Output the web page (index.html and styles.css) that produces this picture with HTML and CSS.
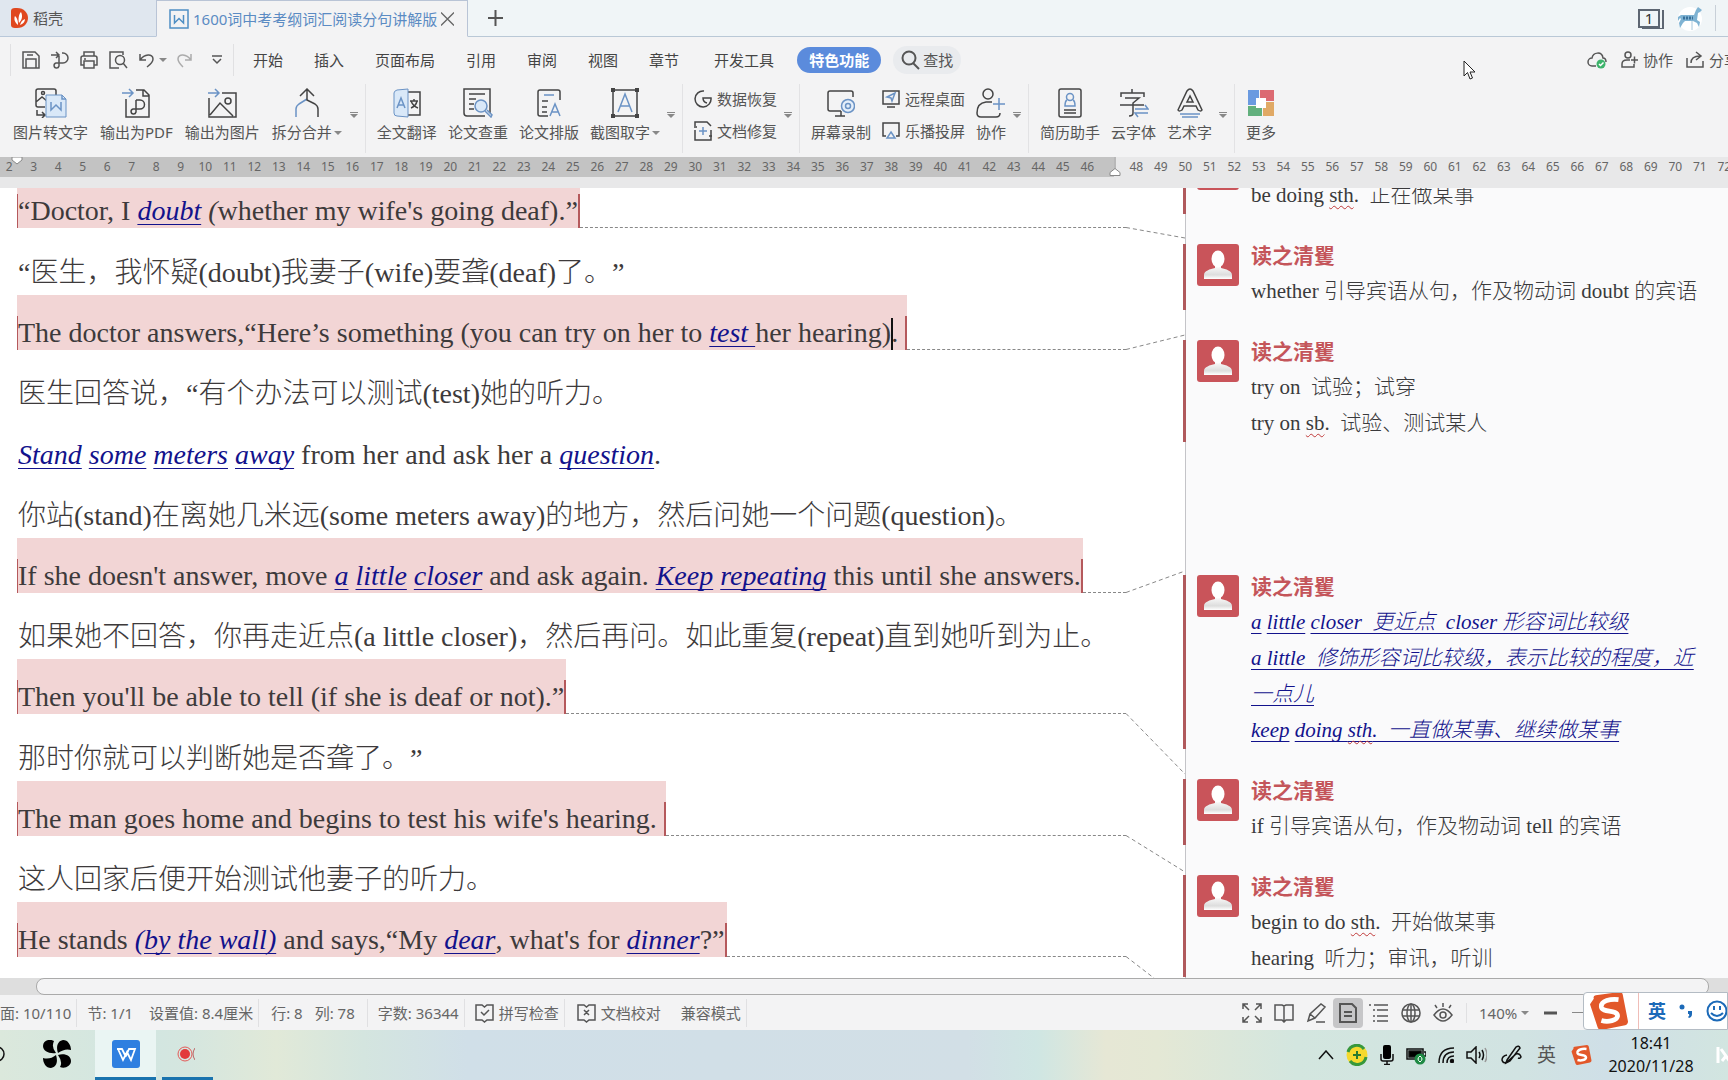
FILE: index.html
```html
<!DOCTYPE html>
<html lang="zh-CN">
<head>
<meta charset="utf-8">
<title>1600词中考考纲词汇阅读分句讲解版</title>
<link rel="stylesheet" href="styles.css">
</head>
<body>
<svg class="defs" aria-hidden="true">
  <defs>
    <linearGradient id="bust" x1="0" y1="0" x2="0" y2="1"><stop offset="0" stop-color="#fff"/><stop offset=".7" stop-color="#ddd"/><stop offset="1" stop-color="#fff"/></linearGradient>
    <symbol id="avatar" viewBox="0 0 42 42"><rect width="42" height="42" rx="3" fill="#c9545a"/><path d="M7 35v-4c0-4 6-6 11-7v-3h6v3c5 1 11 3 11 7v4z" fill="url(#bust)"/><ellipse cx="21" cy="15" rx="6.5" ry="8.5" fill="#fff"/></symbol>
    <symbol id="sogou" viewBox="0 0 40 40"><path d="M4 7Q3 4 6 3.500L31 0q3 0 3.500 3L40 31q0 3-3 4l-25 5q-3 0-4-3L0 13z" fill="#e2582a"/><path d="M30 8C22 7 11 9 12 16c1 6 17 2 17 9 0 5-10 7-17 5" fill="none" stroke="#fff" stroke-width="5"/></symbol>
  </defs>
</svg>

<header class="titlebar">
  <button class="tab tab-home">
    <svg width="17" height="20" viewBox="0 0 17 20"><path d="M0 3q0-3 4-3h2c7 0 11 5 11 10s-4 10-11 10H4q-4 0-4-3z" fill="#e0481f"/><path d="M7 17C3 14 3 10 4 8c2 2 3 4 3 9zM8 15C7 10 8 6 10 4c2 4 1 8-2 11zM9 17c1-3 2-5 5-6 0 3-2 5-5 6z" fill="#fff"/></svg>
    <span>稻壳</span>
  </button>
  <div class="tab tab-doc">
    <svg width="20" height="20" viewBox="0 0 20 20" fill="none" stroke="#4f8fc4" stroke-width="1.500"><rect x="1" y="1" width="18" height="18"/><path d="M5.500 6v8l4.500-4.500 4.500 4.500V6"/></svg>
    <span class="tab-name">1600词中考考纲词汇阅读分句讲解版</span>
    <button class="icon-button" aria-label="关闭"><svg width="13" height="14" viewBox="0 0 13 14" stroke="#666" stroke-width="1.300"><path d="M0 .5l13 13M13 .5l-13 13"/></svg></button>
  </div>
  <div class="titlebar-rest">
    <button class="icon-button" aria-label="新建"><svg width="15" height="16" viewBox="0 0 15 16" stroke="#555" stroke-width="2"><path d="M0 8h15M7.500 0v16"/></svg></button>
    <div class="titlebar-right">
      <span class="window-count">1</span>
      <svg width="26" height="26" viewBox="0 0 26 26"><circle cx="13" cy="14" r="12" fill="#fff"/><path d="M1 12l3-2h13l2-5 2-3 4 3-2 2-2 1-1 7 3 2-1 5-2-4-4-2H8l-2 2-3 5-1-5 2-4-1-1-2 3z" fill="#7fb3d3"/><path d="M6 13h10" stroke="#38709a" stroke-width="3" stroke-dasharray="2 1"/><path d="M15 16v9" stroke="#a8c8dc"/></svg>
    </div>
  </div>
</header>

<nav class="menubar">
  <div class="quick">
    <button class="icon-button" aria-label="保存"><svg width="18" height="18" viewBox="0 0 18 18"><path d="M1 1h12l4 4v12H1zM4 17V8h10v9M5 4h6"/></svg></button>
    <button class="icon-button" aria-label="输出为PDF"><svg width="18" height="18" viewBox="0 0 18 18"><path d="M0 4h8M5 1l3 3-3 3M11 2h1a5 5 0 0 1 0 10H5a2.500 2.500 0 1 0 3 3V5"/></svg></button>
    <button class="icon-button" aria-label="打印"><svg width="18" height="18" viewBox="0 0 18 18"><path d="M4 5V1h10v4M4 14H1V7q0-2 2-2h12q2 0 2 2v7h-3M4 10h10v7H4zM4 8h2"/></svg></button>
    <button class="icon-button" aria-label="打印预览"><svg width="19" height="18" viewBox="0 0 19 18"><path d="M14 4V1H1v16h9"/><circle cx="11" cy="9" r="4.500"/><path d="M14 12l4 5"/></svg></button>
    <button class="icon-button undo" aria-label="撤销"><svg width="15" height="16" viewBox="0 0 15 16"><path d="M1 2v6h6M1.500 7.500C5 2 14 1 14 7c0 3-2 5-6 8"/></svg><i class="caret"></i></button>
    <button class="icon-button redo" aria-label="恢复"><svg width="15" height="16" viewBox="0 0 15 16"><path d="M14 2v6H8M13.500 7.500C10 2 1 1 1 7c0 3 2 5 5 8"/></svg></button>
    <button class="icon-button" aria-label="自定义"><svg width="10" height="10" viewBox="0 0 10 10"><path d="M0 1h10M1 4l4 4 4-4"/></svg></button>
  </div>
  <div class="menus">
    <button>开始</button><button>插入</button><button>页面布局</button><button>引用</button><button>审阅</button><button>视图</button><button>章节</button><button>开发工具</button>
  </div>
  <button class="menu-active">特色功能</button>
  <button class="find"><svg width="19" height="20" viewBox="0 0 19 20" fill="none" stroke="#444" stroke-width="2"><circle cx="8" cy="8" r="6.500"/><path d="M12 13l6 6"/></svg><span>查找</span></button>
  <div class="menu-right">
    <button class="icon-button" aria-label="云同步"><svg width="20" height="18" viewBox="0 0 20 18"><path d="M9 15H5a4 4 0 0 1 0-8C6 1 15 0 16 7c2 0 3 2 3 4"/><circle cx="14" cy="13" r="4.500" fill="#3db36b" stroke="none"/><path d="M12 13l1.500 1.500 3-3" stroke="#fff"/></svg></button>
    <button class="labelled"><svg width="17" height="17" viewBox="0 0 17 17"><circle cx="7" cy="4" r="3"/><path d="M9 9H6q-5 0-5 4v3h12v-3M10 9h7M13.500 5.500v7"/></svg><span>协作</span></button>
    <button class="labelled share"><svg width="18" height="17" viewBox="0 0 18 17"><path d="M1 7v9h16v-6M5 12q0-7 9-7M10 1l5 4-5 4"/></svg><span>分享</span></button>
  </div>
</nav>

<section class="ribbon" aria-label="特色功能">
  <div class="group">
    <button class="tool"><svg width="32" height="30" viewBox="0 0 32 30"><path class="k" d="M10 19H3q-2 0-2-2V3q0-2 2-2h16q2 0 2 2v4M1 14l6-5 5 4M2 22v5h8M7 24l3 3-3 3"/><circle class="k" cx="8" cy="5" r="1.500"/><path d="M11 7h16l4 4v18H11z" fill="#d9e8f8" stroke="#6b93c5"/><path class="b" d="M16 14v8l5-5 5 5v-8M27 7v4h4"/></svg><span>图片转文字</span></button>
    <button class="tool"><svg width="28" height="30" viewBox="0 0 28 30"><path class="b" d="M0 5h10M7 1l4 4-4 4"/><path class="k" d="M14 2h8l5 5v22H4V11M21 2v6h6M14 12h4a4 4 0 0 1 0 9h-7a2.500 2.500 0 1 0 3 3V12"/></svg><span>输出为PDF</span></button>
    <button class="tool"><svg width="29" height="30" viewBox="0 0 29 30"><path class="b" d="M0 5h10M7 1l4 4-4 4"/><path class="k" d="M14 5h14v24H1V10M2 27l10-12 13 13"/><circle class="k" cx="20" cy="13" r="3"/></svg><span>输出为图片</span></button>
    <button class="tool"><svg width="24" height="30" viewBox="0 0 24 30"><path class="b" d="M1 29v-8q0-3 3-5l8-5"/><path class="k" d="M12 1v11l8 4q3 2 3 5v8M5 8l7-7 7 7"/></svg><span>拆分合并<i class="caret"></i></span></button>
    <button class="more" aria-label="更多选项"></button>
  </div>
  <div class="group">
    <button class="tool"><svg width="28" height="30" viewBox="0 0 28 30"><path class="k" d="M15 4h12v23H15M17 13h8M21 11v2M18 20q5-2 6-7M18 13q2 5 7 7"/><path d="M1 5q0-2 3-3l11-1v28L4 28q-3 0-3-3z" fill="#d9e8f8" stroke="#6b93c5"/><path class="b" d="M4 20l4-10 4 10M5 17h6"/></svg><span>全文翻译</span></button>
    <button class="tool"><svg width="30" height="30" viewBox="0 0 30 30"><path class="k" d="M22 28H4q-3 0-3-3V1h26v24M6 6h16M6 11h7M6 16h5M6 21h5"/><circle cx="18" cy="18" r="6" fill="#d9e8f8" stroke="#6b93c5" stroke-width="1.500"/><path class="b" d="M22 23l6 6 1-2-5-5"/></svg><span>论文查重</span></button>
    <button class="tool"><svg width="24" height="30" viewBox="0 0 24 30"><path class="k" d="M11 28H3q-2 0-2-2V4q0-2 2-2h18q2 0 2 2v8M5 13h6M5 19h5M5 24h5"/><path class="b" d="M7 7h10M13 28l5-12 5 12M15 24h6"/></svg><span>论文排版</span></button>
    <button class="tool"><svg width="28" height="30" viewBox="0 0 28 30"><path class="k" d="M2 2h24v26H2z"/><path d="M0 0h4v4H0zM24 0h4v4h-4zM0 26h4v4H0zM24 26h4v4h-4z" fill="#444"/><path class="b" d="M7 24L14 6l7 18M9 18h10"/></svg><span>截图取字<i class="caret"></i></span></button>
    <button class="more" aria-label="更多选项"></button>
  </div>
  <div class="group">
    <div class="stack">
      <button class="tool-small"><svg width="18" height="18" viewBox="0 0 18 18"><path class="k" d="M10 1a8 8 0 1 0 7 7H9q0 4 4 5"/></svg><span>数据恢复</span></button>
      <button class="tool-small"><svg width="18" height="20" viewBox="0 0 18 20"><path class="k" d="M1 5V1h12l4 4M17 9v10H1V9M0 6h3M15 15h3"/><path class="b" d="M9 6v8M5 10h8"/></svg><span>文档修复</span></button>
    </div>
    <button class="more" aria-label="更多选项"></button>
  </div>
  <div class="group">
    <button class="tool"><svg width="28" height="30" viewBox="0 0 28 30"><path class="k" d="M14 23H3q-2 0-2-2V5q0-2 2-2h21q2 0 2 2v4M14 23v5M8 28h10"/><circle cx="21" cy="18" r="6.500" fill="#e5effa" stroke="#6b93c5" stroke-width="1.500"/><circle class="b" cx="21" cy="18" r="2.500"/></svg><span>屏幕录制</span></button>
    <div class="stack">
      <button class="tool-small"><svg width="18" height="18" viewBox="0 0 18 18"><path class="k" d="M1 1h16v13H1zM5 17h8"/><path class="b" d="M5 7l8-4-3 8-1-3z"/></svg><span>远程桌面</span></button>
      <button class="tool-small"><svg width="18" height="18" viewBox="0 0 18 18"><path class="k" d="M4 14H1V1h16v13h-3"/><path class="b" d="M9 10l4 6H5z"/></svg><span>乐播投屏</span></button>
    </div>
    <button class="tool"><svg width="30" height="30" viewBox="0 0 30 30"><circle class="k" cx="12" cy="6" r="5"/><path class="k" d="M16 14h-6q-9 1-9 11 0 4 4 4h15q4 0 4-4"/><path class="b" d="M17 16h12M23 10v12"/></svg><span>协作</span></button>
    <button class="more" aria-label="更多选项"></button>
  </div>
  <div class="group">
    <button class="tool"><svg width="24" height="30" viewBox="0 0 24 30"><rect class="k" x="1" y="1" width="22" height="28" rx="2"/><path class="k" d="M6 22h12M6 25h12"/><circle class="b" cx="12" cy="9" r="3.500"/><path class="b" d="M9 12q-2 1-2 6h10q0-5-2-6"/></svg><span>简历助手</span></button>
    <button class="tool"><svg width="30" height="30" viewBox="0 0 30 30"><path class="k" d="M2 9V5h23v4M13 1v4M6 10h14l-6 5v10q0 3-4 3M1 17h24"/><path class="b" d="M16 21h13l-3-4M29 25H16l3 4"/></svg><span>云字体</span></button>
    <button class="tool"><svg width="26" height="30" viewBox="0 0 26 30"><path class="k" d="M1 22L10 3q3-4 6 0l9 19q-1 2-4 0l-2-4H7l-2 4q-3 2-4 0zM13 8l-3 6h6z"/><path class="b" d="M3 26h20M5 29h16"/></svg><span>艺术字</span></button>
    <button class="more" aria-label="更多选项"></button>
  </div>
  <div class="group">
    <button class="tool"><svg width="26" height="30" viewBox="0 0 26 30"><path d="M0 2h11v15H0z" fill="#6a9ae0"/><path d="M12 2h14v11H12z" fill="#dc6a72"/><path d="M0 18h14v10H0z" fill="#62b07d"/><path d="M15 14h11v14H15z" fill="#e0a965"/><path d="M8 10h10v10H8z" fill="#fff"/></svg><span>更多</span></button>
  </div>
</section>

<div class="ruler" aria-hidden="true">
  <span class="first">2<svg class="indent" width="12" height="8" viewBox="0 0 12 8"><path d="M1 0h10v3L6 7 1 3z" fill="#fff" stroke="#888"/></svg></span><span>3</span><span>4</span><span>5</span><span>6</span><span>7</span><span>8</span><span>9</span><span>10</span><span>11</span><span>12</span><span>13</span><span>14</span><span>15</span><span>16</span><span>17</span><span>18</span><span>19</span><span>20</span><span>21</span><span>22</span><span>23</span><span>24</span><span>25</span><span>26</span><span>27</span><span>28</span><span>29</span><span>30</span><span>31</span><span>32</span><span>33</span><span>34</span><span>35</span><span>36</span><span>37</span><span>38</span><span>39</span><span>40</span><span>41</span><span>42</span><span>43</span><span>44</span><span>45</span><span>46</span><span class="margin-mark"><svg width="12" height="20" viewBox="0 0 12 20"><path d="M6 0v12" stroke="#888"/><path d="M1 18.500v-3l5-4 5 4v3z" fill="#fff" stroke="#888"/></svg></span><span class="out">48</span><span class="out">49</span><span class="out">50</span><span class="out">51</span><span class="out">52</span><span class="out">53</span><span class="out">54</span><span class="out">55</span><span class="out">56</span><span class="out">57</span><span class="out">58</span><span class="out">59</span><span class="out">60</span><span class="out">61</span><span class="out">62</span><span class="out">63</span><span class="out">64</span><span class="out">65</span><span class="out">66</span><span class="out">67</span><span class="out">68</span><span class="out">69</span><span class="out">70</span><span class="out">71</span><span class="out">72</span>
</div>

<main class="workspace">
  <article class="page">
    <p class="line"><span class="mark"><span>“Doctor, I <em>doubt</em> <i>(</i>whether my wife's going deaf).”</span></span><span class="lead"></span><svg class="slant" width="59" height="55"><path d="M0 54.500L59 65"/></svg></p>
    <p class="line"><span class="plain">“医生，我怀疑(doubt)我妻子(wife)要聋(deaf)了。”</span></p>
    <p class="line"><span class="mark"><span>The doctor answers,“Here’s something (you can try on her to <em>test </em>her hearing)<b class="text-cursor"></b>. </span></span><span class="lead"></span><svg class="slant" width="59" height="55"><path d="M0 54.500L59 40"/></svg></p>
    <p class="line"><span class="plain">医生回答说，“有个办法可以测试(test)她的听力。</span></p>
    <p class="line"><span class="plain"><em>Stand</em> <em>some</em> <em>meters</em> <em>away</em> from her and ask her a <em>question</em>.</span></p>
    <p class="line"><span class="plain">你站(stand)在离她几米远(some meters away)的地方，然后问她一个问题(question)。</span></p>
    <p class="line"><span class="mark"><span>If she doesn't answer, move <em>a</em> <em>little</em> <em>closer</em> and ask again. <em>Keep</em> <em>repeating</em> this until she answers.</span></span><span class="lead"></span><svg class="slant" width="59" height="55"><path d="M0 54.500L59 33"/></svg></p>
    <p class="line"><span class="plain">如果她不回答，你再走近点(a little closer)，然后再问。如此重复(repeat)直到她听到为止。</span></p>
    <p class="line"><span class="mark"><span>Then you'll be able to tell (if she is deaf or not).”</span></span><span class="lead"></span><svg class="slant" width="59" height="55"><path d="M0 54.500L59 115"/></svg></p>
    <p class="line"><span class="plain">那时你就可以判断她是否聋了。”</span></p>
    <p class="line"><span class="mark"><span>The man goes home and begins to test his wife's hearing. </span></span><span class="lead"></span><svg class="slant" width="59" height="55"><path d="M0 54.500L59 91"/></svg></p>
    <p class="line"><span class="plain">这人回家后便开始测试他妻子的听力。</span></p>
    <p class="line"><span class="mark"><span>He stands <em class="bare">(</em><em>by</em> <em>the</em> <em>wall)</em> and says,“My <em>dear</em>, what's for <em>dinner</em>?”</span></span><span class="lead"></span><svg class="slant" width="59" height="55"><path d="M0 54.500L59 100"/></svg></p>
  </article>

  <aside class="comments" aria-label="批注">
    <div class="comment-list">
      <section class="comment scrolled"><svg width="42" height="42"><use href="#avatar"/></svg><div><p>be doing <s>sth</s>.  正在做某事</p></div></section>
      <section class="comment"><svg width="42" height="42"><use href="#avatar"/></svg><div><h2>读之清矍</h2><p>whether 引导宾语从句，作及物动词 doubt 的宾语</p></div></section>
      <section class="comment"><svg width="42" height="42"><use href="#avatar"/></svg><div><h2>读之清矍</h2><p>try on  试验；试穿</p><p>try on <s>sb</s>.  试验、测试某人</p></div></section>
      <section class="comment later"><svg width="42" height="42"><use href="#avatar"/></svg><div><h2>读之清矍</h2><p><em>a</em> <em>little</em> <em>closer  更近点  closer 形容词比较级</em></p><p><em>a little  修饰形容词比较级，表示比较的程度，近一点儿</em></p><p><em>keep</em> <em>doing <s>sth</s>.  一直做某事、继续做某事</em></p></div></section>
      <section class="comment"><svg width="42" height="42"><use href="#avatar"/></svg><div><h2>读之清矍</h2><p>if 引导宾语从句，作及物动词 tell 的宾语</p></div></section>
      <section class="comment"><svg width="42" height="42"><use href="#avatar"/></svg><div><h2>读之清矍</h2><p>begin to do <s>sth</s>.  开始做某事</p><p>hearing  听力；审讯，听训</p></div></section>
    </div>
  </aside>
</main>

<div class="hscroll"><div class="thumb"></div></div>

<footer class="statusbar">
  <span class="cell">面: 10/110</span>
  <span class="cell"><span>节: 1/1</span><span>设置值: 8.4厘米</span></span>
  <span class="cell wide"><span>行: 8</span><span>列: 78</span></span>
  <span class="cell">字数: 36344</span>
  <span class="cell"><button class="labelled"><svg width="19" height="20" viewBox="0 0 19 20"><path d="M1 2h6l2.500 2L12 2h6v15h-6l-2.500 2L7 17H1zM6 9l3 3 5-5"/></svg><span>拼写检查</span></button></span>
  <span class="cell wide"><button class="labelled"><svg width="19" height="20" viewBox="0 0 19 20"><path d="M1 2h6l2.500 2L12 2h6v15h-6l-2.500 2L7 17H1zM7 7l5 5M12 7l-5 5"/></svg><span>文档校对</span></button><span>兼容模式</span></span>
  <div class="views">
    <button class="icon-button" aria-label="全屏"><svg width="20" height="20" viewBox="0 0 20 20"><path d="M1 6V1h5M1 1l6 6M14 1h5v5M19 1l-6 6M1 14v5h5M1 19l6-6M14 19h5v-5M19 19l-6-6"/></svg></button>
    <button class="icon-button" aria-label="阅读"><svg width="20" height="20" viewBox="0 0 20 20"><path d="M10 3L8 2H1v15h7l2 2 2-2h7V2h-7zM10 3v15"/></svg></button>
    <button class="icon-button" aria-label="写作"><svg width="20" height="20" viewBox="0 0 20 20"><path d="M2 18l2-7L15 1l4 3-10 11zM4 11l5 4M10 19h9"/></svg></button>
    <button class="icon-button current" aria-label="页面视图"><svg width="18" height="20" viewBox="0 0 18 20"><path d="M1 1h12l4 4v14H1zM5 9h8M5 13h8" stroke-width="2"/></svg></button>
    <button class="icon-button" aria-label="大纲"><svg width="20" height="20" viewBox="0 0 20 20"><path d="M0 2h2M5 2h14M4 7h2M8 7h11M4 13h2M8 13h11M4 18h2M8 18h11"/></svg></button>
    <button class="icon-button" aria-label="网页"><svg width="20" height="20" viewBox="0 0 20 20"><circle cx="10" cy="10" r="9"/><ellipse cx="10" cy="10" rx="4" ry="9"/><path d="M10 1v18M2 7h16M2 13h16"/></svg></button>
    <button class="icon-button" aria-label="护眼"><svg width="20" height="20" viewBox="0 0 20 20"><path d="M1 12q9-12 18 0-9 12-18 0zM10 4V0M4 5L2 2M16 5l2-3"/><circle cx="10" cy="12" r="3"/></svg></button>
  </div>
  <div class="zoom">
    <button class="zoom-value">140%<i class="caret"></i></button>
    <button class="icon-button" aria-label="缩小"><svg width="13" height="4"><path d="M0 2h13" stroke-width="3"/></svg></button>
    <span class="track"></span>
  </div>
</footer>

<footer class="taskbar">
  <div class="apps">
    <button class="app edge" aria-label="搜索"><svg width="5" height="16" viewBox="0 0 5 16" fill="none" stroke="#111" stroke-width="1.500"><circle cx="-3" cy="8" r="7"/></svg></button>
    <button class="app" aria-label="浏览器"><svg width="28" height="28" viewBox="0 0 28 28"><path d="M13 13C6 14 0 11 0 6s6-8 11-5q-3 6 2 12zM15 13c-2-5-1-12 5-13 5 0 8 5 8 10q-6-2-13 3zM15 15c7-2 13 1 13 6s-6 8-11 6q3-5-2-12zM13 15c2 6 1 12-5 13-5 0-8-5-8-10q7 2 13-3z" fill="#000"/></svg></button>
    <button class="app open front" aria-label="WPS文字"><svg width="28" height="28" viewBox="0 0 28 28"><rect width="28" height="28" rx="3" fill="#2f7fe0"/><path d="M6 9l5 11 4-8 4 8 4-11h-6l-3 7M5 9h5l4 8" fill="none" stroke="#fff" stroke-width="1.800"/></svg></button>
    <button class="app open small" aria-label="录屏"><svg width="18" height="16" viewBox="0 0 18 16"><circle cx="8" cy="8" r="7" fill="none" stroke="#e45a58"/><circle cx="8" cy="8" r="5" fill="#e23b3b"/><path d="M18 2q-4 6 0 12" fill="none" stroke="#b66"/></svg></button>
  </div>
  <div class="tray">
    <svg width="16" height="10" viewBox="0 0 16 10"><path d="M1 9l7-8 7 8"/></svg>
    <svg width="22" height="22" viewBox="0 0 22 22"><circle cx="11" cy="11" r="10.500" fill="#f5d92e" stroke="none"/><path d="M2 8a9 9 0 0 1 16-3M20 13a9 9 0 0 1-16 4" stroke="#37983c" stroke-width="3"/><path d="M11 7v8M7 11h8" stroke="#287a30" stroke-width="2"/></svg>
    <svg width="14" height="20" viewBox="0 0 14 20"><rect x="3" y="0" width="8" height="14" rx="2" fill="#000" stroke="none"/><path d="M1 9v5q0 2 2 2h8q2 0 2-2V9M7 16v3M4 19.500h6"/></svg>
    <svg width="20" height="20" viewBox="0 0 20 20"><path d="M1 4h16v10H1zM18 7h2v4h-2"/><path d="M3 6h12v6H3z" fill="#000"/><circle cx="14" cy="14" r="5.500" fill="#1f8a45" stroke="none"/><path d="M14 11q4 3 0 6-4-3 0-6z" stroke="#fff" stroke-width="1"/></svg>
    <svg width="16" height="16" viewBox="0 0 16 16"><path d="M1 16Q1 1 16 1M5 16Q5 5 16 5M9 16q0-7 7-7"/><circle cx="14" cy="14" r="1.500" fill="#000"/></svg>
    <svg width="21" height="18" viewBox="0 0 21 18"><path d="M1 6h4l5-5v16l-5-5H1zM13 6q2 3 0 6M16 4q3 5 0 10"/><path d="M19 2q4 7 0 14" stroke="#999"/></svg>
    <svg width="21" height="20" viewBox="0 0 21 20"><path d="M6 15L15 2q3-2 4 1L9 16l-4 2zM6 10q-5 1-5 5 1 4 5 2l9-8q4-1 5 3-1 2-3 1"/></svg>
    <span class="ime-state">英</span>
    <svg width="21" height="20"><use href="#sogou"/></svg>
    <div class="clock"><time>18:41</time><time>2020/11/28</time></div>
    <svg class="notice" width="12" height="16" viewBox="0 0 12 16"><path d="M2 0v16M5 2l10 14M6 14l4-5"/></svg>
  </div>
</footer>

<div class="ime-bar">
  <svg width="40" height="38"><use href="#sogou"/></svg>
  <div class="ime-tools">
    <span>英</span>
    <svg width="14" height="14" viewBox="0 0 14 14" fill="#1c6ab8"><circle cx="3" cy="3" r="2.500"/><path d="M9 7h4v3q0 3-3 4l-1-1q2-1 1-3H9z"/></svg>
    <svg width="22" height="22" viewBox="0 0 22 22" fill="none" stroke="#1c6ab8" stroke-width="2"><circle cx="11" cy="11" r="9.500"/><path d="M8 6v4M14 6v4M5 13q6 6 12 0"/></svg>
  </div>
</div>
<svg class="pointer" width="13" height="20" viewBox="0 0 13 20"><path d="M1 1v15l3.500-3.500L7 19l2.500-1L7 12h5z" fill="#fff" stroke="#222"/></svg>
</body>
</html>
```
FILE: styles.css
```css
* { box-sizing: border-box; }

body {
  margin: 0;
  height: 100vh;
  position: relative;
  display: flex;
  flex-direction: column;
  overflow: hidden;
  background: #f3f3f4;
  color: #555;
  font: 15px/20px "Noto Sans", "Noto Sans CJK SC", sans-serif;
}

button {
  display: flex;
  align-items: center;
  padding: 0;
  border: 0;
  background: none;
  color: inherit;
  font: inherit;
  white-space: nowrap;
}

svg { display: block; flex: none; }
.defs { position: absolute; width: 0; height: 0; }
.icon-button { flex: none; }

.caret {
  display: inline-block;
  border: 4px solid transparent;
  border-top: 4px solid #888;
  border-bottom: 0;
}

/* Title bar */
.titlebar { display: flex; height: 37px; flex: none; }
.tab { display: flex; align-items: center; border-bottom: 1px solid #b9c8da; }
.tab-home { width: 156px; gap: 5px; padding-left: 11px; background: #e0e7ef; }
.tab-doc {
  width: 312px;
  gap: 4px;
  padding-left: 12px;
  border: 1px solid #b9c4d6;
  border-bottom-color: #f3f3f4;
  color: #5b8bc3;
}
.tab-name { white-space: nowrap; }
.titlebar-rest {
  flex: 1;
  display: flex;
  align-items: center;
  justify-content: space-between;
  padding: 0 12px 0 20px;
  border-bottom: 1px solid #b9c8d6;
  background: #f0f5f7;
}
.titlebar-right { display: flex; align-items: center; gap: 17px; padding-right: 12px; border-right: 1px solid #c8d0d8; }
.window-count {
  width: 22px;
  border: 2px solid #5d6672;
  color: #333;
  line-height: 15px;
  text-align: center;
  box-shadow: 2px 0 0 #f0f5f7, 4px 1px 0 #5d6672;
}

/* Menu bar */
.menubar { display: flex; align-items: center; height: 47px; padding-bottom: 2px; flex: none; }
.menubar svg { fill: none; stroke: #555; stroke-width: 1.5; }
.quick {
  display: flex;
  align-items: center;
  gap: 11px;
  height: 32px;
  margin-left: 10px;
  padding: 0 11px;
  border-left: 1px solid #e0e0e2;
  border-right: 1px solid #e0e0e2;
}
.undo { gap: 5px; margin-right: -1px; }
.redo { opacity: .45; margin-right: 9px; }
.menus { display: flex; gap: 31px; padding: 0 28px 0 19px; color: #444; }
.menus button:last-child { padding-left: 4px; }
.menu-active {
  height: 26px;
  padding: 0 12px;
  margin-left: -5px;
  border-radius: 13px;
  background: #5b8bdc;
  color: #fff;
  font-weight: 700;
}
.find { height: 28px; gap: 3px; padding: 0 8px; margin-left: 12px; border-radius: 14px; background: #e9ebee; }
.find svg { stroke-width: 2; }
.menu-right { flex: 1; display: flex; justify-content: flex-end; gap: 14px; margin-right: -11px; }
.labelled { gap: 5px; }
.share { margin-left: -1px; }

/* Ribbon */
.ribbon { display: flex; height: 73px; flex: none; overflow: hidden; }
.group {
  display: flex;
  align-items: flex-start;
  gap: 11px;
  height: 69px;
  padding: 0 7px 0 11px;
  border-right: 1px solid #e2e2e4;
}
.group:first-child { padding-left: 13px; gap: 12px; }
.group:last-child { border: 0; }
.tool { flex-direction: column; gap: 4px; padding-top: 4px; }
.tool .caret { margin-left: 2px; vertical-align: 3px; }
.stack { display: flex; flex-direction: column; gap: 12px; padding-top: 5px; }
.tool-small { gap: 5px; height: 20px; }
.more { width: 8px; height: 7px; margin: 28px 0 0 -4px; border-top: 1px solid #888; }
.more::after { content: ""; border: 4px solid transparent; border-top-color: #888; border-bottom: 0; }
.k { fill: none; stroke: #444; stroke-width: 1.5; }
.b { fill: none; stroke: #6b93c5; stroke-width: 1.5; }

/* Ruler */
.ruler {
  display: flex;
  flex: none;
  height: 31px;
  padding-bottom: 11px;
  margin: 0 -9px 0 -3px;
  background: #e8e8e9;
  color: #666;
  font-size: 12px;
  text-align: center;
}
.ruler span { flex: 1 1 0; min-width: 0; background: #c3c3c3; }
.ruler .out { background: none; }
.ruler .first { position: relative; }
.indent { position: absolute; left: 14px; top: 0; }
.ruler .margin-mark { background: linear-gradient(90deg, #c3c3c3 60%, #e8e8e9 60%); }
.margin-mark svg { margin-left: 9px; }

/* Document */
.workspace { flex: 1; min-height: 0; display: flex; overflow: hidden; background: #fff; }
.page {
  flex: 1;
  display: flex;
  flex-direction: column;
  margin: -15px 0 15px;
  padding-left: 17px;
  color: #3d3a3b;
  font: 300 28px/34px "Liberation Serif", "Noto Sans CJK SC", serif;
  text-spacing-trim: space-all;
}
.line { flex: 1 1 0; min-height: 0; display: flex; margin: 0; white-space: pre; }
.mark { height: 55px; padding-top: 21px; background: #f2d5d5; }
.mark > span { display: block; height: 34px; border: solid #b5595c; border-width: 0 2px 0 1px; }
.plain { padding: 22px 0 0 1px; }
.page em, .comments em {
  color: #12128c;
  text-decoration: underline 1px;
  text-underline-offset: 4px;
  text-decoration-skip-ink: none;
}
.page .bare { text-decoration: none; }
.lead { flex: 1; height: 55px; border-bottom: 1px dashed #888; }
.slant { overflow: visible; fill: none; stroke: #888; stroke-dasharray: 4 3; }
.text-cursor { display: inline-block; width: 2px; height: 32px; margin-right: -2px; background: #111; vertical-align: -8px; }

/* Comments */
.comments { width: 543px; border-left: 1px solid #c4c4c8; background: #fafafb; }
.comment-list { display: flex; flex-direction: column; gap: 30px; margin: -40px 0 0 -3px; }
.comment {
  display: flex;
  gap: 12px;
  padding: 0 28px 1px 11px;
  border-left: 3px solid #b0595c;
  font: 300 21px/36px "Liberation Serif", "Noto Sans CJK SC", serif;
  color: #3a3a3c;
  text-spacing-trim: space-all;
}
.scrolled p { padding-top: 29px; }
.later { margin-top: 103px; }
.comment h2 {
  margin: 0 0 8px;
  color: #c4555a;
  font: 700 21px/21px "Noto Sans CJK SC", sans-serif;
}
.comment p { margin: 0; white-space: pre-wrap; }
.comment s { text-decoration: underline wavy #c03a3a 1px; text-underline-offset: 3px; }

/* Horizontal scroll bar */
.hscroll { flex: none; height: 17px; padding: 0 19px 0 36px; background: #dedede; }
.thumb { height: 17px; border: 1px solid #aaa; border-radius: 8px; background: #f3f3f4; }

/* Status bar */
.statusbar { display: flex; align-items: center; height: 35px; flex: none; color: #666; white-space: nowrap; }
.statusbar svg { fill: none; stroke: #555; stroke-width: 1.5; }
.cell { display: flex; align-items: center; gap: 16px; height: 28px; padding: 0 5px 0 10px; border-right: 1px solid #e0e0e2; }
.cell:first-child { padding-left: 0; }
.cell.wide { gap: 12px; padding: 0 12px; }
.cell:nth-child(6) { gap: 20px; padding-right: 5px; }
.views { flex: 1; display: flex; justify-content: flex-end; align-items: center; gap: 12px; padding-right: 13px; }
.views .current { height: 30px; padding: 0 6px; margin: 0 -6px 0 -5px; border-radius: 4px; background: #c6c6c8; }
.zoom { display: flex; align-items: center; width: 262px; padding-left: 12px; gap: 15px; border-left: 1px solid #e0e0e2; }
.zoom-value { gap: 4px; }
.track { flex: 1; height: 1px; background: #888; }

/* Taskbar */
.taskbar {
  display: flex;
  justify-content: space-between;
  height: 50px;
  flex: none;
  color: #111;
  background: linear-gradient(90deg, #dbe8dc 0, #d2e6e1 8%, #d5e6df 11%, #e1e9d8 16%, #d4e5df 21%, #d0dfe8 27%, #d2dfe6 56%, #cfe6e3 60%, #e6e7d5 64%, #e4e8d5 67%, #d3e6df 75%, #d1e3e2 88%, #cfdfe7 93%, #d2e5e0 100%);
}
.apps { display: flex; }
.app { justify-content: center; width: 61px; border-bottom: 3px solid transparent; }
.app.edge { width: 5px; margin-right: 21px; }
.app.open { border-color: #1a73ae; }
.app.front { margin-left: 8px; background: #eaf5f3; }
.app.small { width: 51px; margin-left: 6px; padding-right: 4px; }
.tray { display: flex; align-items: center; gap: 12px; }
.tray :nth-child(n+7) { margin-left: 2px; }
.tray svg { fill: none; stroke: #111; stroke-width: 1.5; }
.tray use { stroke: none; }
.ime-state { width: 21px; color: #555; font-size: 19px; text-align: center; }
.clock { display: flex; flex-direction: column; width: 90px; margin-right: 6px; font-size: 16px; line-height: 23px; text-align: center; }
.tray .notice { stroke: #fff; stroke-width: 3; }

/* Floating input-method bar and pointer */
.ime-bar {
  position: absolute;
  right: 0;
  bottom: 50px;
  display: flex;
  align-items: center;
  width: 145px;
  height: 38px;
  padding-left: 5px;
  overflow: hidden;
  border: 1px solid #b4bcc4;
  border-radius: 4px 0 0 4px;
  background: #fff;
}
.ime-tools {
  display: flex;
  align-items: center;
  gap: 13px;
  height: 36px;
  margin-left: 9px;
  padding-left: 9px;
  border-left: 1px solid #f0bdb8;
  color: #1c6ab8;
  font-size: 18px;
  font-weight: 700;
}
.pointer { position: absolute; left: 1463px; top: 60px; }
```
